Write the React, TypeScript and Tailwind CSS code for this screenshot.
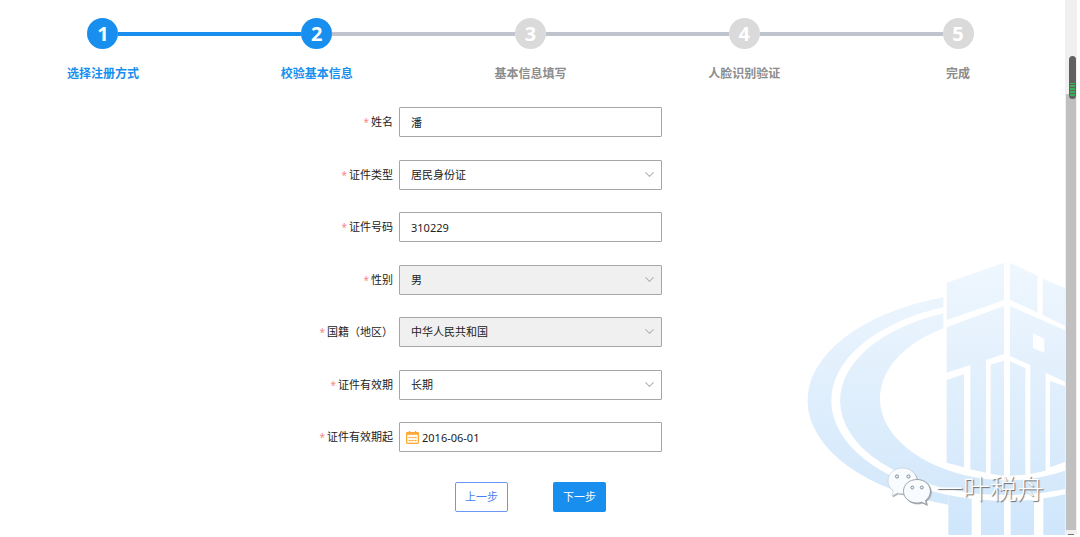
import React from 'react';
import { ChevronDown } from 'lucide-react';

interface Field {
  id: string;
  label: string;
  value: string;
  kind: 'text' | 'select' | 'date';
  disabled?: boolean;
}

const STEPS = ['选择注册方式', '校验基本信息', '基本信息填写', '人脸识别验证', '完成'];
const CURRENT = 1;

const FIELDS: Field[] = [
  { id: 'name', label: '姓名', value: '潘', kind: 'text' },
  { id: 'idType', label: '证件类型', value: '居民身份证', kind: 'select' },
  { id: 'idNumber', label: '证件号码', value: '310229', kind: 'text' },
  { id: 'gender', label: '性别', value: '男', kind: 'select', disabled: true },
  { id: 'nation', label: '国籍（地区）', value: '中华人民共和国', kind: 'select', disabled: true },
  { id: 'validity', label: '证件有效期', value: '长期', kind: 'select' },
  { id: 'validFrom', label: '证件有效期起', value: '2016-06-01', kind: 'date' },
];

const lineColor = (i: number) => {
  if (i < 0 || i >= STEPS.length - 1) return 'bg-transparent';
  return i < CURRENT ? 'bg-[#188eee]' : 'bg-[#bfc4cf]';
};

const Steps = () => (
  <ol className="-mx-1 flex pt-[18px]">
    {STEPS.map((step, i) => (
      <li key={step} className="flex flex-1 flex-col items-center">
        <div className="flex w-full items-center">
          <span className={`h-1 flex-1 ${lineColor(i - 1)}`} />
          <span
            className={`flex size-[31px] items-center justify-center rounded-full text-[20px] font-bold leading-none text-white ${
              i <= CURRENT ? 'bg-[#188eee]' : 'bg-[#dadada]'
            }`}
          >
            {i + 1}
          </span>
          <span className={`h-1 flex-1 ${lineColor(i)}`} />
        </div>
        <span
          className={`mt-[17px] text-xs font-semibold leading-4 ${i <= CURRENT ? 'text-[#188eee]' : 'text-[#8c8c8c]'}`}
        >
          {step}
        </span>
      </li>
    ))}
  </ol>
);

const CalendarIcon = () => (
  <svg viewBox="0 0 13 13" className="pointer-events-none absolute left-[7px] top-[9px] size-[13px]" fill="none">
    <rect x="0.6" y="1.6" width="11.8" height="10.8" rx="0.8" fill="#fff8ec" stroke="#ffa733" strokeWidth="1.2" />
    <path d="M0.500 1.500h12v2.200h-12z" fill="#ffa733" />
    <path d="M3.500 0v3M9.500 0v3" stroke="#ffa733" strokeWidth="1.4" />
    <path d="M2.500 6.500h8M2.500 9.500h8" stroke="#ffa733" strokeWidth="1.1" strokeDasharray="2.200 0.700" />
  </svg>
);

const control =
  'block h-[30px] w-full appearance-none rounded-[1px] border border-[#a6a6a6] bg-white text-[11px] text-[#222] outline-none disabled:bg-[#f0f0f0] disabled:opacity-100';

const FormField = ({ field }: { field: Field }) => (
  <div className="grid grid-cols-[1fr_minmax(0,263px)_1fr] items-center even:mb-[22px] odd:mb-[23px] last:mb-0">
    <label htmlFor={field.id} className="pr-[6px] text-right text-[11px] text-[#222]">
      <span className="mr-[2px] text-[10px] text-[#f78989]">*</span>
      {field.label}
    </label>
    <div className="relative">
      {field.kind === 'select' ? (
        <>
          <select id={field.id} disabled={field.disabled} className={`${control} px-[11px]`}>
            <option>{field.value}</option>
          </select>
          <ChevronDown
            size={15}
            strokeWidth={1.75}
            className="pointer-events-none absolute right-[5px] top-[7px] text-[#b0b3b8]"
          />
        </>
      ) : (
        <input
          id={field.id}
          type="text"
          defaultValue={field.value}
          className={`${control} pr-[11px] ${field.kind === 'date' ? 'pl-[22px]' : 'pl-[11px]'}`}
        />
      )}
      {field.kind === 'date' && <CalendarIcon />}
    </div>
  </div>
);

const Emblem = () => (
  <svg viewBox="0 0 825 855" className="pointer-events-none absolute bottom-0 right-0 h-[285px] w-[275px]">
    <defs>
      <linearGradient id="sky" gradientUnits="userSpaceOnUse" x1="0" y1="40" x2="0" y2="855">
        <stop offset="0" stopColor="#eff7fe" />
        <stop offset="0.5" stopColor="#dfeefc" />
        <stop offset="1" stopColor="#cfe6fb" />
      </linearGradient>
    </defs>
    <g fill="url(#sky)">
      {/* rings */}
      <path d="M460 142A600 327 0 0 0 475 764V735A525 300 0 0 1 460 172Z" />
      <path d="M460 190A498 283 0 0 0 650 735A498 283 0 0 0 825 717V662A400 247 0 0 1 650 692A400 247 0 0 1 460 235Z" />
      {/* roof */}
      <path d="M470 98L642 38V150L470 210Z" />
      <path d="M660 38L742 77V187L660 150Z" />
      <path d="M758 86L825 115V227L758 195Z" />
      {/* facade */}
      <path d="M470 232L642 168V312L588 330V668L541 658V345L470 368Z" />
      <path d="M470 390L522 372V652L470 638Z" />
      <path d="M602 344L642 332V677L602 672Z" />
      <path
        fillRule="evenodd"
        d="M660 168L825 241V395L767 368V662L721 672V345L660 318ZM729 250V294L763 308V266Z"
      />
      <path d="M660 334L706 354V674L660 677Z" />
      <path d="M780 393L825 409V636L780 652Z" />
      {/* base */}
      <path d="M475 735Q510 743 545 746V855H475Z" />
      <path d="M573 749Q608 752 642 752V855H573Z" />
      <path d="M662 752Q698 752 732 749V855H662Z" />
      <path d="M760 745Q794 741 825 733V855H760Z" />
    </g>
  </svg>
);

const Watermark = () => (
  <div className="absolute bottom-7 right-[21px] flex items-end gap-[5px]">
    <svg viewBox="0 0 44 38" className="mb-[2px] h-[38px] w-11 drop-shadow-[1px_1px_0px_#a8adb2]">
      <path
        d="M15.500 1C7 1 1 6.800 1 14c0 4.200 2 7.600 5.200 10L5 29l5.500-3c1.600.5 3.400.8 5 .8C23.800 26.800 30 21 30 14S23.800 1 15.500 1Z"
        fill="#f8fcff"
        stroke="#c3c9ce"
        strokeWidth="0.6"
      />
      <path
        d="M30 12.500c-7.800 0-13.500 5.200-13.500 11.700S22.200 36 30 36c1.600 0 3.200-.3 4.700-.8L39.500 37.500l-1-4C41.500 31.200 43.400 28 43.400 24.200c0-6.500-5.700-11.700-13.400-11.700Z"
        fill="#f8fcff"
        stroke="#8a8f94"
        strokeWidth="0.8"
      />
      <g fill="#e8f1f8" stroke="#7d868e" strokeWidth="0.9">
        <circle cx="10" cy="9.500" r="1.600" />
        <circle cx="21.500" cy="9.500" r="1.600" />
        <circle cx="25.300" cy="20.500" r="1.500" />
        <circle cx="34.800" cy="20.500" r="1.500" />
      </g>
    </svg>
    <span className="text-[27px] font-light leading-9 text-white [text-shadow:1px_1px_1px_#666]">一叶税舟</span>
  </div>
);

const ScrollBar = () => (
  <div className="relative mr-[3px] flex w-3 shrink-0 flex-col items-center bg-[#f0f0f0] pt-[94px]">
    <div className="w-[10px] flex-1 bg-[#c0c0c0]" />
    <div className="flex h-[5px] w-full items-end justify-center">
      <span className="h-px w-[6px] bg-[#777]" />
    </div>
    <div className="absolute right-px top-14 flex h-[43px] w-[7px] flex-col justify-end gap-px rounded-full bg-[#606060] px-px pb-[3px]">
      {[0, 1, 2, 3, 4].map((n) => (
        <span key={n} className={`w-full bg-[#3fae5a] ${n < 1 ? 'h-px' : 'h-[2px]'}`} />
      ))}
    </div>
  </div>
);

const App: React.FC = () => {
  return (
    <div className="flex min-h-screen overflow-hidden bg-white pb-[2px] font-['Noto_Sans','Noto_Sans_CJK_SC',sans-serif]">
      <main className="relative min-w-0 flex-1 pr-1">
        <Emblem />
        <div className="relative">
          <Steps />
          <form className="pt-[25px]" onSubmit={(e) => e.preventDefault()}>
            <div>
              {FIELDS.map((field) => (
                <FormField key={field.id} field={field} />
              ))}
            </div>
            <div className="mt-[30px] flex justify-center gap-[45px]">
              <button
                type="button"
                className="h-[30px] w-[53px] rounded-[2px] border border-[#6b97f8] bg-white text-[11px] text-[#4a7df0]"
              >
                上一步
              </button>
              <button type="submit" className="h-[30px] w-[53px] rounded-[2px] bg-[#188eee] text-[11px] text-white">
                下一步
              </button>
            </div>
          </form>
        </div>
        <Watermark />
      </main>
      <ScrollBar />
    </div>
  );
};

export default App;
